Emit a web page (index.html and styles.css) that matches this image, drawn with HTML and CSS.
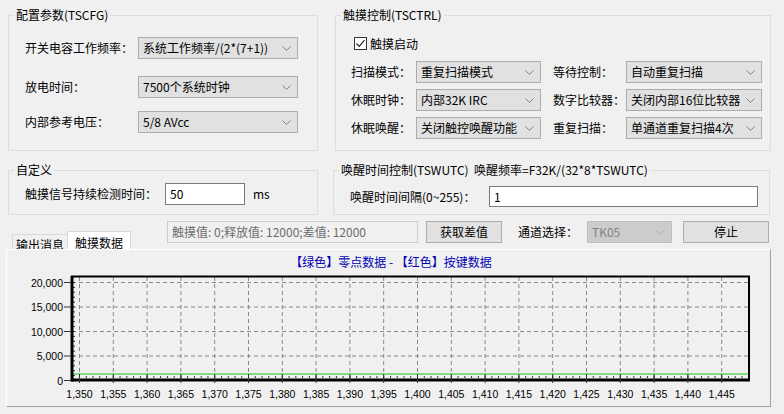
FILE: index.html
```html
<!doctype html>
<html lang="zh-CN">
<head>
	<meta charset="UTF-8">
	<title>触摸按键配置</title>
	<link rel="stylesheet" href="styles.css">
</head>
<body>
	<div class="row top">
		<fieldset class="grp g1">
			<legend>配置参数(TSCFG)</legend>
			<div class="frow">
				<span class="lbl l113">开关电容工作频率：</span>
				<div class="combo w160"><span>系统工作频率/(2*(7+1))</span><svg width="9" height="5" viewBox="0 0 9 5"><path d="M0.5 0.5 L4.5 4.5 L8.5 0.5" fill="none" stroke="#808080"/></svg></div>
			</div>
			<div class="frow r2">
				<span class="lbl l113">放电时间：</span>
				<div class="combo w160"><span>7500个系统时钟</span><svg width="9" height="5" viewBox="0 0 9 5"><path d="M0.5 0.5 L4.5 4.5 L8.5 0.5" fill="none" stroke="#808080"/></svg></div>
			</div>
			<div class="frow r3">
				<span class="lbl l113">内部参考电压：</span>
				<div class="combo w160"><span>5/8 AVcc</span><svg width="9" height="5" viewBox="0 0 9 5"><path d="M0.5 0.5 L4.5 4.5 L8.5 0.5" fill="none" stroke="#808080"/></svg></div>
			</div>
		</fieldset>

		<fieldset class="grp g2">
			<legend>触摸控制(TSCTRL)</legend>
			<div class="chk">
				<span class="box"><svg width="11" height="11" viewBox="0 0 11 11"><path d="M1.5 5.5 L4.2 8.3 L9.5 2.2" fill="none" stroke="#222" stroke-width="1.2"/></svg></span>
				<span>触摸启动</span>
			</div>
			<div class="ctl">
				<span class="lbl">扫描模式：</span>
				<div class="combo"><span>重复扫描模式</span><svg width="9" height="5" viewBox="0 0 9 5"><path d="M0.5 0.5 L4.5 4.5 L8.5 0.5" fill="none" stroke="#808080"/></svg></div>
				<span class="lbl c3">等待控制：</span>
				<div class="combo"><span>自动重复扫描</span><svg width="9" height="5" viewBox="0 0 9 5"><path d="M0.5 0.5 L4.5 4.5 L8.5 0.5" fill="none" stroke="#808080"/></svg></div>

				<span class="lbl">休眠时钟：</span>
				<div class="combo"><span>内部32K IRC</span><svg width="9" height="5" viewBox="0 0 9 5"><path d="M0.5 0.5 L4.5 4.5 L8.5 0.5" fill="none" stroke="#808080"/></svg></div>
				<span class="lbl c3">数字比较器：</span>
				<div class="combo"><span>关闭内部16位比较器</span><svg width="9" height="5" viewBox="0 0 9 5"><path d="M0.5 0.5 L4.5 4.5 L8.5 0.5" fill="none" stroke="#808080"/></svg></div>

				<span class="lbl">休眠唤醒：</span>
				<div class="combo"><span>关闭触控唤醒功能</span><svg width="9" height="5" viewBox="0 0 9 5"><path d="M0.5 0.5 L4.5 4.5 L8.5 0.5" fill="none" stroke="#808080"/></svg></div>
				<span class="lbl c3">重复扫描：</span>
				<div class="combo"><span>单通道重复扫描4次</span><svg width="9" height="5" viewBox="0 0 9 5"><path d="M0.5 0.5 L4.5 4.5 L8.5 0.5" fill="none" stroke="#808080"/></svg></div>
			</div>
		</fieldset>
	</div>

	<div class="row mid">
		<fieldset class="grp g3">
			<legend>自定义</legend>
			<div class="frow in3">
				<span class="lbl l140">触摸信号持续检测时间：</span>
				<div class="txt w80">50</div>
				<span class="unit">ms</span>
			</div>
		</fieldset>
		<fieldset class="grp g4">
			<legend>唤醒时间控制(TSWUTC)  唤醒频率=F32K/(32*8*TSWUTC)</legend>
			<div class="frow in4">
				<span class="lbl l139">唤醒时间间隔(0~255)：</span>
				<div class="txt w269">1</div>
			</div>
		</fieldset>
	</div>

	<div class="bar">
		<div class="tabs">
			<div class="tab">输出消息</div>
			<div class="tab on">触摸数据</div>
		</div>
		<div class="txt dis w252">触摸值: 0;释放值: 12000;差值: 12000</div>
		<div class="btn b76">获取差值</div>
		<span class="lbl ch">通道选择：</span>
		<div class="combo dis w85"><span>TK05</span><svg width="9" height="5" viewBox="0 0 9 5"><path d="M0.5 0.5 L4.5 4.5 L8.5 0.5" fill="none" stroke="#a8a8a8"/></svg></div>
		<div class="btn b86">停止</div>
	</div>

	<div class="panel">
		<svg class="chart" width="763" height="156" viewBox="0 0 763 156">
			<defs>
				<pattern id="xt" patternUnits="userSpaceOnUse" x="72" y="0" width="6.76" height="156">
					<line x1="0.5" y1="126" x2="0.5" y2="130" stroke="#333" stroke-width="1"/>
				</pattern>
				<pattern id="yt" patternUnits="userSpaceOnUse" x="0" y="130" width="763" height="4.9">
					<line x1="64" y1="0.5" x2="68" y2="0.5" stroke="#333" stroke-width="1"/>
				</pattern>
			</defs>
			<text class="ttl" x="384" y="17" text-anchor="middle">【绿色】零点数据 - 【红色】按键数据</text>

			<g stroke="#888" stroke-dasharray="4 3" stroke-width="1">
				<path d="M65 32.5H742 M65 57H742 M65 81.5H742 M65 106H742"/>
				<path d="M72.5 27V130 M106.3 27V130 M140.1 27V130 M173.9 27V130 M207.7 27V130 M241.5 27V130 M275.3 27V130 M309.1 27V130 M342.9 27V130 M376.7 27V130 M410.5 27V130 M444.3 27V130 M478.1 27V130 M511.9 27V130 M545.7 27V130 M579.5 27V130 M613.3 27V130 M647.1 27V130 M680.9 27V130 M714.7 27V130"/>
			</g>

			<rect x="66" y="124" width="676" height="4" fill="url(#xt)"/>
			<rect x="64" y="28" width="5" height="102" fill="url(#yt)"/>

			<line x1="66" y1="124" x2="742" y2="124" stroke="#5ad65a" stroke-width="1.5"/>

			<rect x="65" y="26.5" width="677" height="103.5" fill="none" stroke="#000" stroke-width="2"/>
			<line x1="65" y1="26" x2="65" y2="131.5" stroke="#000" stroke-width="3"/>
			<line x1="64" y1="130" x2="743" y2="130" stroke="#000" stroke-width="3"/>

			<g stroke="#333" stroke-width="1">
				<path d="M57 32.5H64 M57 57H64 M57 81.5H64 M57 106H64 M57 130.5H64"/>
				<path d="M72.5 124V133 M106.3 124V133 M140.1 124V133 M173.9 124V133 M207.7 124V133 M241.5 124V133 M275.3 124V133 M309.1 124V133 M342.9 124V133 M376.7 124V133 M410.5 124V133 M444.3 124V133 M478.1 124V133 M511.9 124V133 M545.7 124V133 M579.5 124V133 M613.3 124V133 M647.1 124V133 M680.9 124V133 M714.7 124V133"/>
			</g>

			<g class="ax" text-anchor="end">
				<text x="56" y="36.5">20,000</text>
				<text x="56" y="61">15,000</text>
				<text x="56" y="85.5">10,000</text>
				<text x="56" y="110">5,000</text>
				<text x="56" y="134.5">0</text>
			</g>
			<g class="ax" text-anchor="middle">
				<text x="72.5" y="148">1,350</text>
				<text x="106.3" y="148">1,355</text>
				<text x="140.1" y="148">1,360</text>
				<text x="173.9" y="148">1,365</text>
				<text x="207.7" y="148">1,370</text>
				<text x="241.5" y="148">1,375</text>
				<text x="275.3" y="148">1,380</text>
				<text x="309.1" y="148">1,385</text>
				<text x="342.9" y="148">1,390</text>
				<text x="376.7" y="148">1,395</text>
				<text x="410.5" y="148">1,400</text>
				<text x="444.3" y="148">1,405</text>
				<text x="478.1" y="148">1,410</text>
				<text x="511.9" y="148">1,415</text>
				<text x="545.7" y="148">1,420</text>
				<text x="579.5" y="148">1,425</text>
				<text x="613.3" y="148">1,430</text>
				<text x="647.1" y="148">1,435</text>
				<text x="680.9" y="148">1,440</text>
				<text x="714.7" y="148">1,445</text>
			</g>
		</svg>
	</div>
</body>
</html>
```

FILE: styles.css
```css
*{
	box-sizing: border-box;
}
body{
	margin: 0;
	background: #f0f0f0;
	color: #000;
	font-family: "Microsoft YaHei", "Noto Sans CJK SC", "Noto Sans", sans-serif;
	font-size: 12px;
	width: 784px;
	height: 414px;
	overflow: hidden;
}
.row{
	display: flex;
	padding-left: 8px;
}
.top{
	padding-top: 7px;
	gap: 17px;
}
.mid{
	margin-top: 11px;
	gap: 15px;
}
.grp{
	margin: 0;
	padding: 0 0 0 16px;
	border: 1px solid #dcdcdc;
	min-width: 0;
}
.grp legend{
	margin-left: -11px;
	padding: 0 2px;
	line-height: 16px;
	white-space: pre;
}
.g1{
	width: 310px;
	height: 144px;
}
.g2{
	width: 436px;
	height: 144px;
	padding-left: 15px;
}
.g2 legend{
	margin-left: -10px;
}
.g3{
	width: 310px;
	height: 53px;
}
.g4{
	width: 437px;
	height: 53px;
}
.frow{
	display: flex;
	align-items: center;
	height: 22px;
	margin-top: 14px;
}
.frow.r2{
	margin-top: 17px;
}
.frow.r3{
	margin-top: 13px;
}
.frow.in3{
	margin-top: 5px;
}
.frow.in4{
	margin-top: 8px;
	height: 21px;
}
.lbl{
	line-height: 22px;
	white-space: nowrap;
}
.l113{ width: 113px; }
.l140{ width: 140px; }
.l139{ width: 139px; }

.combo{
	display: flex;
	align-items: center;
	justify-content: space-between;
	height: 22px;
	border: 1px solid #adadad;
	background: #e1e1e1;
	padding: 0 6px 0 4px;
	white-space: nowrap;
	overflow: hidden;
}
.combo span{
	line-height: 20px;
}
.combo svg{
	flex: none;
	margin-left: 3px;
}
.combo.dis{
	background: #cccccc;
	border-color: #bfbfbf;
	color: #838383;
}
.w160{ width: 160px; }
.w85{ width: 85px; }

.chk{
	display: flex;
	align-items: center;
	margin-top: 14px;
	margin-left: 3px;
	height: 13px;
}
.chk .box{
	width: 13px;
	height: 13px;
	border: 1px solid #333;
	background: #fff;
	margin-right: 3px;
}
.chk .box svg{
	display: block;
}
.ctl{
	display: grid;
	grid-template-columns: 65px 125px 85px 136px;
	grid-auto-rows: 22px;
	row-gap: 6px;
	margin-top: 11px;
}
.ctl .c3{
	padding-left: 12px;
}

.txt{
	height: 100%;
	border: 1px solid #7a7a7a;
	background: #fff;
	padding: 0 4px;
	line-height: 20px;
	white-space: nowrap;
	overflow: hidden;
}
.txt.dis{
	height: 22px;
	background: #f0f0f0;
	border-color: #cccccc;
	color: #6d6d6d;
}
.w80{ width: 80px; }
.w269{ width: 269px; }
.w252{ width: 251px; margin-left: 36px; }
.unit{
	margin-left: 8px;
	line-height: 22px;
}

.bar{
	display: flex;
	align-items: flex-start;
	height: 28px;
	margin-top: 6px;
	padding-left: 12px;
}
.tabs{
	display: flex;
	align-items: flex-end;
	align-self: flex-end;
}
.tab{
	width: 56px;
	height: 15px;
	padding-top: 1px;
	border: 1px solid #d9d9d9;
	border-bottom: none;
	line-height: 17px;
	text-align: center;
	overflow: hidden;
	white-space: nowrap;
}
.tab.on{
	width: 64px;
	height: 18px;
	padding-top: 2px;
	background: #fff;
	margin-left: -1px;
}
.btn{
	height: 22px;
	border: 1px solid #adadad;
	background: #e1e1e1;
	text-align: center;
	line-height: 20px;
}
.b76{ width: 76px; margin-left: 8px; }
.b86{ width: 86px; margin-left: 11px; }
.ch{
	width: 69px;
	margin-left: 16px;
}

.panel{
	margin-left: 6px;
	width: 765px;
	height: 158px;
	border: 1px solid;
	border-color: #ffffff #a0a0a0 #a0a0a0 #ffffff;
	background: #f0f0f0;
}
.chart{
	display: block;
}
.ttl{
	fill: #0000b4;
	font-size: 12px;
}
.ax text{
	font-family: "Liberation Sans", Arial, sans-serif;
	font-size: 10.5px;
	fill: #000;
}
```
